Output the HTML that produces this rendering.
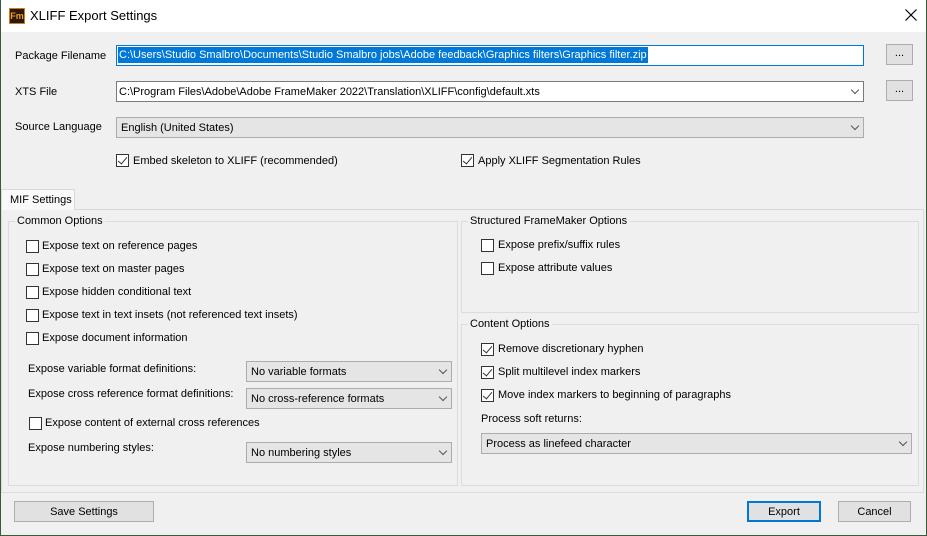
<!DOCTYPE html>
<html><head><meta charset="utf-8"><style>
*{box-sizing:border-box;margin:0;padding:0}
body{width:927px;height:536px;overflow:hidden;background:#f0f0f0;font-family:"Liberation Sans",sans-serif;font-size:11px;color:#000;position:relative}
.a{position:absolute;white-space:nowrap}
.t{line-height:16px}
.win{position:absolute;left:0;top:0;width:927px;height:536px;border-left:1px solid #3b5a3b;border-right:1px solid #3b5a3b;border-bottom:1px solid #3b5a3b}
.title{position:absolute;left:1px;top:0;width:925px;height:32px;background:#fff}
.cb{position:absolute;width:13px;height:13px;border:1px solid #333;background:#fff}
.cb.k::after{content:"";position:absolute;left:3px;top:0px;width:4px;height:8px;border-right:1.3px solid #333;border-bottom:1.3px solid #333;transform:rotate(40deg)}
.combo{position:absolute;height:21px;background:#e5e5e5;border:1px solid #acacac;padding-left:4px;line-height:20px}
.arr{position:absolute;right:5px;top:5px;width:6px;height:6px;border-right:1px solid #555;border-bottom:1px solid #555;transform:rotate(45deg)}
.btn{position:absolute;background:#e1e1e1;border:1px solid #adadad;text-align:center}
.grp{position:absolute;border:1px solid #dcdcdc}
.glbl{position:absolute;background:#f0f0f0;padding:0 2px;line-height:16px}
</style></head><body>
<div class="title"></div>
<div class="a" style="left:9px;top:8px;width:16px;height:16px;background:#2b1a0a;border:1px solid #d47a1a;color:#f39a2b;font-size:9px;font-weight:bold;line-height:14px;text-align:center">Fm</div>
<div class="a" style="left:30px;top:8px;font-size:13px;line-height:16px">XLIFF Export Settings</div>
<svg class="a" style="left:905px;top:9px" width="12" height="12" viewBox="0 0 12 12"><path d="M0.5 0.5L11.5 11.5M11.5 0.5L0.5 11.5" stroke="#000" stroke-width="1.2"/></svg>

<div class="a t" style="left:15px;top:48px">Package Filename</div>
<div class="a" style="left:116px;top:45px;width:748px;height:21px;background:#fff;border:1px solid #0078d7"></div>
<div class="a t" style="left:118px;top:47px;background:#0078d7;color:#fff;padding:0 1px">C:\Users\Studio Smalbro\Documents\Studio Smalbro jobs\Adobe feedback\Graphics filters\Graphics filter.zip</div>
<div class="btn" style="left:886px;top:44px;width:27px;height:21px;line-height:17px">...</div>

<div class="a t" style="left:15px;top:84px">XTS File</div>
<div class="a" style="left:116px;top:81px;width:748px;height:21px;background:#fff;border:1px solid #7a7a7a;padding-left:2px;line-height:20px">C:\Program Files\Adobe\Adobe FrameMaker 2022\Translation\XLIFF\config\default.xts<div class="arr"></div></div>
<div class="btn" style="left:886px;top:80px;width:27px;height:21px;line-height:17px">...</div>

<div class="a t" style="left:15px;top:119px">Source Language</div>
<div class="combo" style="left:116px;top:117px;width:748px">English (United States)<div class="arr"></div></div>

<div class="cb k" style="left:116px;top:154px"></div><div class="a t" style="left:133px;top:153px">Embed skeleton to XLIFF (recommended)</div>
<div class="cb k" style="left:461px;top:154px"></div><div class="a t" style="left:478px;top:153px">Apply XLIFF Segmentation Rules</div>

<div class="a" style="left:1px;top:209px;width:923px;height:284px;border:1px solid #dcdcdc;border-top-color:#d9d9d9;background:#f0f0f0"></div>
<div class="a" style="left:1px;top:189px;width:74px;height:21px;background:#f9f9f9;border:1px solid #d9d9d9;border-bottom:none;padding-left:8px;line-height:20px">MIF Settings</div>

<div class="grp" style="left:8px;top:221px;width:450px;height:265px"></div>
<div class="glbl" style="left:15px;top:213px">Common Options</div>
<div class="cb" style="left:26px;top:240px"></div><div class="a t" style="left:42px;top:238px">Expose text on reference pages</div>
<div class="cb" style="left:26px;top:263px"></div><div class="a t" style="left:42px;top:261px">Expose text on master pages</div>
<div class="cb" style="left:26px;top:286px"></div><div class="a t" style="left:42px;top:284px">Expose hidden conditional text</div>
<div class="cb" style="left:26px;top:309px"></div><div class="a t" style="left:42px;top:307px">Expose text in text insets (not referenced text insets)</div>
<div class="cb" style="left:26px;top:332px"></div><div class="a t" style="left:42px;top:330px">Expose document information</div>
<div class="a t" style="left:28px;top:361px">Expose variable format definitions:</div>
<div class="combo" style="left:246px;top:361px;width:206px">No variable formats<div class="arr"></div></div>
<div class="a t" style="left:28px;top:386px">Expose cross reference format definitions:</div>
<div class="combo" style="left:246px;top:388px;width:206px">No cross-reference formats<div class="arr"></div></div>
<div class="cb" style="left:29px;top:417px"></div><div class="a t" style="left:45px;top:415px">Expose content of external cross references</div>
<div class="a t" style="left:28px;top:440px">Expose numbering styles:</div>
<div class="combo" style="left:246px;top:442px;width:206px">No numbering styles<div class="arr"></div></div>

<div class="grp" style="left:461px;top:221px;width:458px;height:92px"></div>
<div class="glbl" style="left:468px;top:213px">Structured FrameMaker Options</div>
<div class="cb" style="left:481px;top:239px"></div><div class="a t" style="left:498px;top:237px">Expose prefix/suffix rules</div>
<div class="cb" style="left:481px;top:262px"></div><div class="a t" style="left:498px;top:260px">Expose attribute values</div>

<div class="grp" style="left:461px;top:324px;width:458px;height:162px"></div>
<div class="glbl" style="left:468px;top:316px">Content Options</div>
<div class="cb k" style="left:481px;top:343px"></div><div class="a t" style="left:498px;top:341px">Remove discretionary hyphen</div>
<div class="cb k" style="left:481px;top:366px"></div><div class="a t" style="left:498px;top:364px">Split multilevel index markers</div>
<div class="cb k" style="left:481px;top:389px"></div><div class="a t" style="left:498px;top:387px">Move index markers to beginning of paragraphs</div>
<div class="a t" style="left:481px;top:411px">Process soft returns:</div>
<div class="combo" style="left:481px;top:433px;width:431px">Process as linefeed character<div class="arr"></div></div>

<div class="btn" style="left:14px;top:501px;width:140px;height:21px;line-height:20px">Save Settings</div>
<div class="btn" style="left:747px;top:501px;width:74px;height:21px;line-height:18px;border:2px solid #0078d7">Export</div>
<div class="btn" style="left:838px;top:501px;width:73px;height:21px;line-height:20px">Cancel</div>
<div class="win"></div>
</body></html>
